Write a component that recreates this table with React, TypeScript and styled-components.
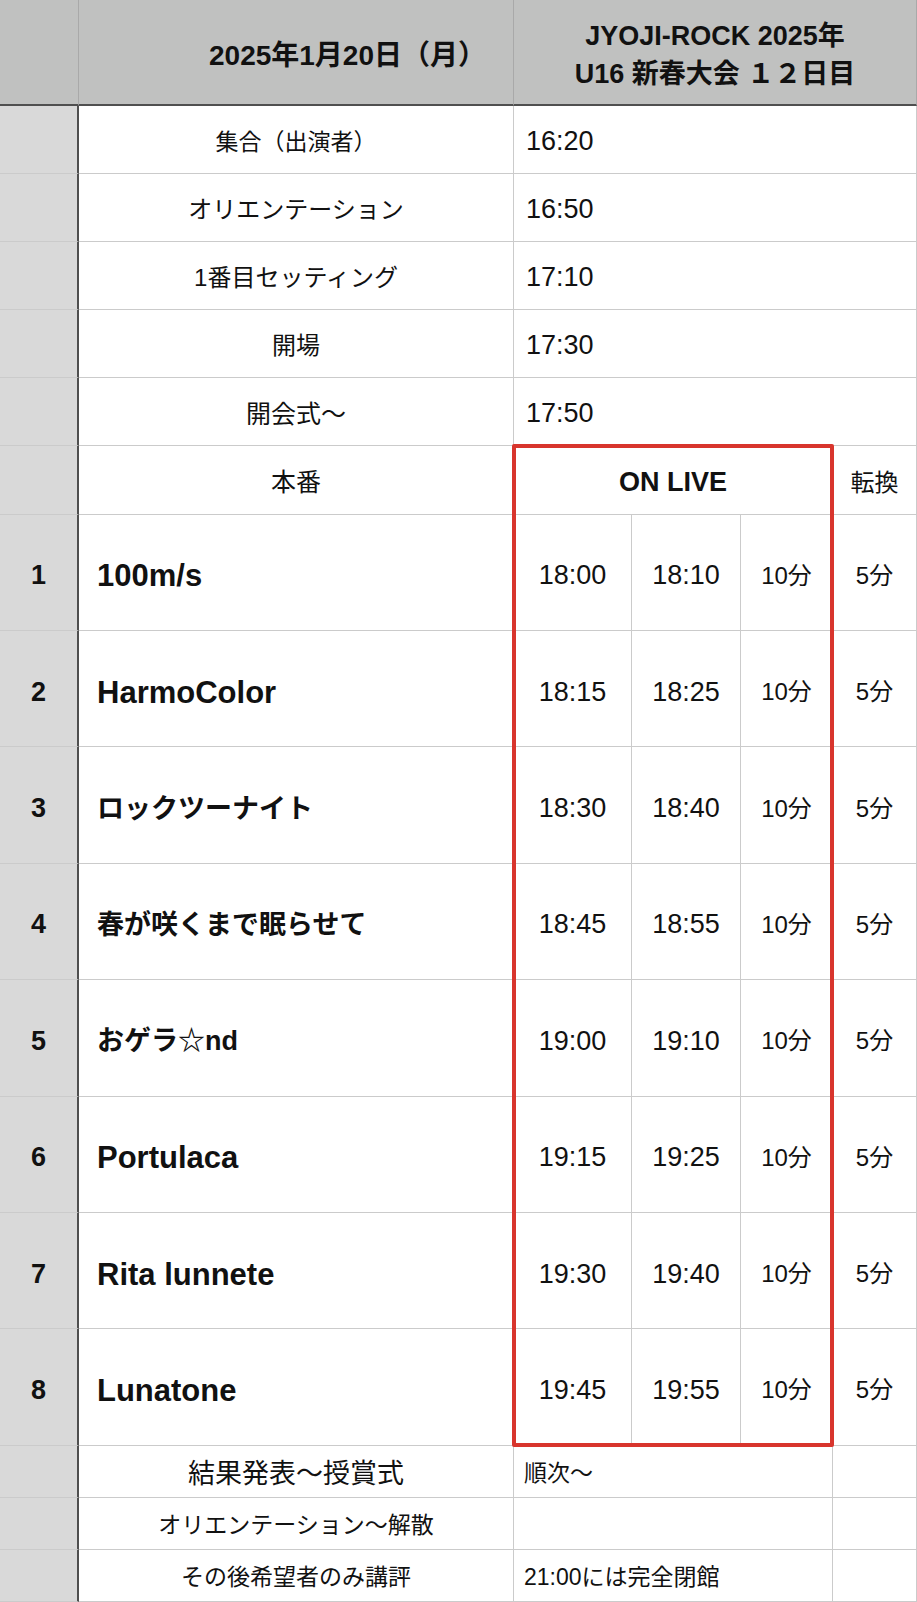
import React from "react";
import styled, { createGlobalStyle } from "styled-components";

const GlobalStyle = createGlobalStyle`
  body {
    margin: 0;
    background: #fff;
    font-family: "Liberation Sans", "Noto Sans CJK JP", sans-serif;
  }
`;

const Sheet = styled.div`
  position: relative;
  display: grid;
  width: 917px;
  grid-template-columns: 79px 435px 118px 109px 92px 84px;
  grid-template-rows: 106px repeat(6, 68.1px) repeat(8, 116.4px) repeat(3, 52.03px);
  color: #111;
  font-family: "Liberation Sans", "Noto Sans CJK JP", sans-serif;
`;

const Cell = styled.div<{ $span?: number }>`
  box-sizing: border-box;
  display: flex;
  align-items: center;
  min-width: 0;
  white-space: nowrap;
  border-right: 1px solid #cbcbcb;
  border-bottom: 1px solid #cbcbcb;
  grid-column: ${(p) => (p.$span ? `span ${p.$span}` : "auto")};
`;

// header row
const HeaderCell = styled(Cell)`
  background: #c0c1c0;
  border-right-color: #a9a9a9;
  border-bottom: 2px solid #4f4f4f;
  font-weight: 700;
  font-size: 27px;
`;

const DateCell = styled(HeaderCell)`
  justify-content: flex-end;
  padding: 2px 27px 0 0;
  font-size: 28px;
`;

const TitleCell = styled(HeaderCell)`
  flex-direction: column;
  justify-content: center;
  padding-top: 6px;
  line-height: 38px;
  text-align: center;
`;

// grey numbering column
const IndexCell = styled(Cell)`
  background: #d9d9d9;
  border-right: 2px solid #4f4f4f;
  justify-content: center;
  padding-top: 7px;
  font-weight: 700;
  font-size: 27px;
`;

const LabelCell = styled(Cell)<{ $size?: number }>`
  justify-content: center;
  font-size: ${(p) => p.$size ?? 24}px;
`;

const ClockCell = styled(Cell)`
  padding: 4px 0 0 12px;
  font-size: 27px;
`;

const NoteCell = styled(Cell)`
  padding-left: 10px;
  font-size: 23px;
`;

const CenterCell = styled(Cell)<{ $size?: number; $bold?: boolean; $drop?: number }>`
  justify-content: center;
  padding-top: ${(p) => p.$drop ?? 0}px;
  font-size: ${(p) => p.$size ?? 24}px;
  font-weight: ${(p) => (p.$bold ? 700 : 400)};
`;

const NameCell = styled(Cell)<{ $cjk: boolean }>`
  padding: ${(p) => (p.$cjk ? 2 : 8)}px 0 0 18px;
  font-weight: 700;
  font-size: ${(p) => (p.$cjk ? 27 : 31)}px;
`;

// red frame round the live block
const LiveFrame = styled.div`
  position: absolute;
  grid-column: 3 / 6;
  grid-row: 7 / 16;
  top: -2px;
  left: -2px;
  right: -1px;
  bottom: -1px;
  border: 4px solid #d8352d;
  border-radius: 2px;
  pointer-events: none;
  z-index: 2;
`;

const prep = [
  { label: "集合（出演者）", time: "16:20", size: 23 },
  { label: "オリエンテーション", time: "16:50" },
  { label: "1番目セッティング", time: "17:10" },
  { label: "開場", time: "17:30" },
  { label: "開会式〜", time: "17:50", size: 25 },
];

const acts = [
  { name: "100m/s", start: "18:00", end: "18:10" },
  { name: "HarmoColor", start: "18:15", end: "18:25" },
  { name: "ロックツーナイト", start: "18:30", end: "18:40" },
  { name: "春が咲くまで眠らせて", start: "18:45", end: "18:55" },
  { name: "おゲラ☆nd", start: "19:00", end: "19:10" },
  { name: "Portulaca", start: "19:15", end: "19:25" },
  { name: "Rita lunnete", start: "19:30", end: "19:40" },
  { name: "Lunatone", start: "19:45", end: "19:55" },
];

const closing = [
  { label: "結果発表〜授賞式", note: "順次〜", size: 27 },
  { label: "オリエンテーション〜解散", note: "", size: 23 },
  { label: "その後希望者のみ講評", note: "21:00には完全閉館", size: 23 },
];

const hasCjk = (s: string) => /[^\x00-\x7f]/.test(s.replace("☆", ""));

export default function App() {
  return (
    <>
      <GlobalStyle />
      <Sheet>
        <HeaderCell />
        <DateCell>2025年1月20日（月）</DateCell>
        <TitleCell $span={4}>
          <span>JYOJI-ROCK 2025年</span>
          <span>U16 新春大会 １２日目</span>
        </TitleCell>

        {prep.map((row) => (
          <React.Fragment key={row.label}>
            <IndexCell />
            <LabelCell $size={row.size}>{row.label}</LabelCell>
            <ClockCell $span={4}>{row.time}</ClockCell>
          </React.Fragment>
        ))}

        <IndexCell />
        <LabelCell $size={25}>本番</LabelCell>
        <CenterCell $span={3} $size={27} $bold $drop={5}>
          ON LIVE
        </CenterCell>
        <CenterCell>転換</CenterCell>

        {acts.map((act, i) => (
          <React.Fragment key={act.name}>
            <IndexCell>{i + 1}</IndexCell>
            <NameCell $cjk={hasCjk(act.name)}>{act.name}</NameCell>
            <CenterCell $size={27} $drop={7}>{act.start}</CenterCell>
            <CenterCell $size={27} $drop={7}>{act.end}</CenterCell>
            <CenterCell $drop={2}>10分</CenterCell>
            <CenterCell $drop={2}>5分</CenterCell>
          </React.Fragment>
        ))}

        {closing.map((row) => (
          <React.Fragment key={row.label}>
            <IndexCell />
            <LabelCell $size={row.size}>{row.label}</LabelCell>
            <NoteCell $span={3}>{row.note}</NoteCell>
            <Cell />
          </React.Fragment>
        ))}

        <LiveFrame />
      </Sheet>
    </>
  );
}
